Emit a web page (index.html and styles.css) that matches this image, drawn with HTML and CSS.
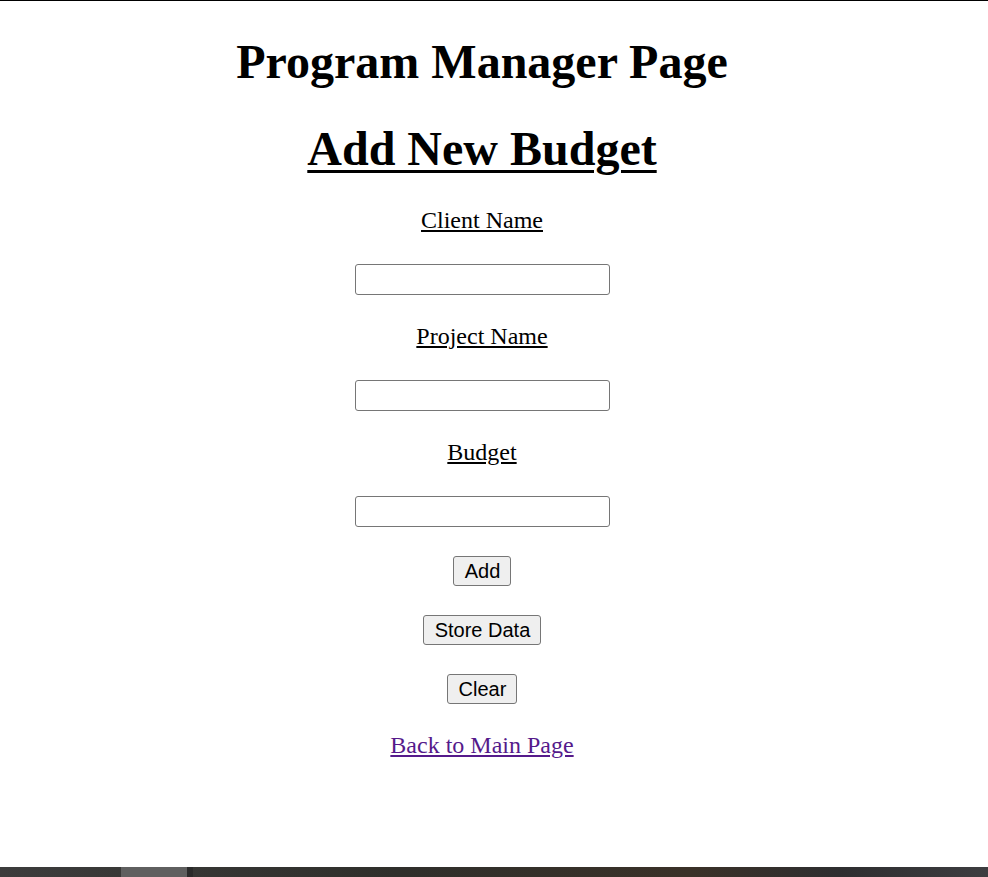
FILE: index.html
```html
<!DOCTYPE html>
<html lang="en">
<head>
<meta charset="utf-8">
<title>Program Manager Page</title>
<link rel="stylesheet" href="styles.css">
</head>
<body>
<div class="page">
  <main class="content">
    <h1 class="title">Program Manager Page</h1>
    <h1 class="subtitle">Add New Budget</h1>
    <label class="field-label label-first" for="client">Client Name</label>
    <input class="field-input" type="text" id="client">
    <label class="field-label" for="project">Project Name</label>
    <input class="field-input" type="text" id="project">
    <label class="field-label" for="budget">Budget</label>
    <input class="field-input" type="text" id="budget">
    <button class="btn btn-first" type="button">Add</button>
    <button class="btn" type="button">Store Data</button>
    <button class="btn" type="button">Clear</button>
    <a class="back-link" href="#">Back to Main Page</a>
  </main>
  <div class="taskbar">
    <span class="taskbar-seg seg-a"></span>
    <span class="taskbar-seg seg-b"></span>
    <span class="taskbar-seg seg-c"></span>
  </div>
</div>
</body>
</html>
```
FILE: styles.css
```css
html, body {
  margin: 0;
  padding: 0;
  background: #ffffff;
}

body {
  font-family: "Liberation Serif", "Times New Roman", serif;
  color: #000000;
}

.page {
  height: 877px;
  display: flex;
  flex-direction: column;
  border-top: 1px solid #000000;
  box-sizing: border-box;
  overflow: hidden;
}

.content {
  flex: 1;
  width: 964px;
  display: flex;
  flex-direction: column;
  align-items: center;
  text-align: center;
}

.title,
.subtitle {
  font-size: 48px;
  line-height: 55px;
  font-weight: bold;
  margin: 0;
}

.title {
  margin-top: 33px;
}

.subtitle {
  margin-top: 32px;
  text-decoration: underline;
  text-decoration-thickness: 3px;
  text-underline-offset: 5px;
}

.field-label {
  font-size: 24px;
  line-height: 27px;
  text-decoration: underline;
  margin-top: 28px;
}

.label-first {
  margin-top: 31px;
}

.field-input {
  margin-top: 30px;
  width: 255px;
  height: 31px;
  box-sizing: border-box;
  border: 1px solid #767676;
  border-radius: 3px;
  padding: 2px 3px;
  font-size: 20px;
  background: #ffffff;
}

.btn {
  margin-top: 29px;
  height: 30px;
  font-family: "Liberation Sans", Arial, sans-serif;
  font-size: 20px;
  line-height: 22px;
  padding: 2px 10px 2px 11px;
  border: 1px solid #767676;
  border-radius: 3px;
  background: #efefef;
  color: #000000;
  box-sizing: border-box;
}

.btn-first {
  margin-top: 29px;
}

.back-link {
  margin-top: 28px;
  font-size: 24px;
  line-height: 27px;
  color: #551a8b;
  text-decoration: underline;
}

.taskbar {
  height: 10px;
  display: flex;
  background: linear-gradient(90deg, #3c3c3c 0%, #2f2f2b 40%, #3a3128 70%, #2e2e30 85%, #3d3d40 100%);
}

.taskbar-seg {
  display: block;
  height: 100%;
}

.seg-a {
  width: 121px;
}

.seg-b {
  width: 66px;
  background: #5f5f5f;
}

.seg-c {
  width: 6px;
  background: #2a2a2a;
}
```
